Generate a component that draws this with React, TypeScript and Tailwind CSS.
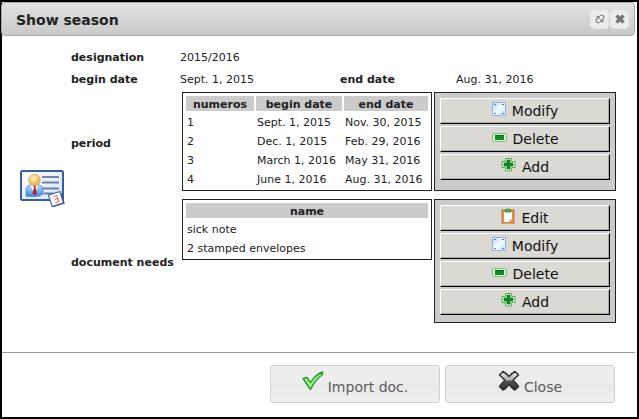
import type { ReactNode } from 'react';

function ModifyIcon() {
  return (
    <svg width="14" height="16" viewBox="0 0 14 16" aria-hidden="true">
      <defs>
        <linearGradient id="sheet" x1="0" y1="0" x2="1" y2="1">
          <stop offset="0" stopColor="#b5d5f8" />
          <stop offset="0.5" stopColor="#f4faff" />
          <stop offset="1" stopColor="#c3dffb" />
        </linearGradient>
      </defs>
      <rect x="0.5" y="1.5" width="13" height="13" fill="url(#sheet)" stroke="#8fb4e2" />
      <path d="M2 3h2v1H2zM10 3h2v1h-2zM2 12h2v1H2zM10 12h2v1h-2z" fill="#4f7fb8" />
    </svg>
  );
}

function DeleteIcon() {
  return (
    <svg width="15" height="16" viewBox="0 0 15 16" aria-hidden="true">
      <rect x="0.5" y="4.5" width="14" height="8" rx="1.5" fill="#dcf5da" stroke="#79c079" />
      <rect x="3" y="6" width="9" height="5" fill="#128a22" />
      <rect x="3" y="6" width="9" height="1" fill="#0a6417" />
    </svg>
  );
}

function AddIcon() {
  return (
    <svg width="15" height="16" viewBox="0 0 15 16" aria-hidden="true">
      <path d="M4.500 1.500h6v3h3.500v6h-3.500v3.500h-6v-3.500h-3.500v-6h3.500z" fill="#e4f8e2" stroke="#55aa58" strokeLinejoin="round" />
      <path d="M6 3h3v3h3v3h-3v3h-3v-3h-3v-3h3z" fill="#0f8a20" stroke="#08701a" strokeWidth="0.600" />
    </svg>
  );
}

function EditIcon() {
  return (
    <svg width="14" height="16" viewBox="0 0 14 16" aria-hidden="true">
      <rect x="1" y="2" width="12" height="13" fill="#e79045" stroke="#c4702a" />
      <path d="M3 4h8v7l-3 3H3z" fill="#fbfcff" />
      <path d="M8 14v-3h3z" fill="#cdd7e6" />
      <path d="M4 4V2.500Q4 1 7 1t3 1.500V4z" fill="#58ac50" stroke="#3b8538" strokeWidth="0.800" />
    </svg>
  );
}

function SeasonIcon() {
  return (
    <svg width="45" height="38" viewBox="0 0 45 38" role="img" aria-label="season">
      <defs>
        <linearGradient id="card" x1="0" y1="0" x2="1" y2="1">
          <stop offset="0" stopColor="#ffffff" />
          <stop offset="1" stopColor="#cfe2fa" />
        </linearGradient>
        <radialGradient id="head" cx="0.4" cy="0.35" r="0.7">
          <stop offset="0" stopColor="#fff2bd" />
          <stop offset="1" stopColor="#dfa443" />
        </radialGradient>
        <linearGradient id="suit" x1="0" y1="0" x2="0" y2="1">
          <stop offset="0" stopColor="#b9dcff" />
          <stop offset="1" stopColor="#3c8be0" />
        </linearGradient>
      </defs>
      <rect x="1" y="1" width="42" height="29" rx="1.500" fill="url(#card)" stroke="#3a5ba2" strokeWidth="2" />
      <path d="M22 7h17M22 12.500h17M22 18.500h17M24 23.500h10" stroke="#777caa" strokeWidth="2" />
      <path d="M6 26v-5q0-6 5-6h7q5 0 5 6v3q-3 2.500-8 2.500T6 26z" fill="url(#suit)" stroke="#3473bd" strokeWidth="0.700" />
      <path d="M10.500 15h8l-4 9z" fill="#ffffff" />
      <path d="M13 15.500h3l-.5 2 1.500 6-2.500 2-2-2 1.500-6z" fill="#bd202b" />
      <circle cx="14.500" cy="10" r="5.800" fill="url(#head)" stroke="#d09b43" strokeWidth="0.600" />
      <g transform="rotate(-18 36 29)">
        <rect x="30" y="23" width="12" height="12" fill="#ffffff" stroke="#426da7" strokeWidth="1.200" />
        <path d="M34 26h4v3h-3h3v3.500h-4" fill="none" stroke="#e77777" strokeWidth="1.200" />
        <path d="M30.500 35.500H42.500V25" fill="none" stroke="#294f88" />
      </g>
    </svg>
  );
}

function CheckIcon() {
  return (
    <svg width="22" height="20" viewBox="0 0 22 20" aria-hidden="true">
      <path d="M1 7.500l4-1 3.500 5Q13 4 20.500 1v2.500Q13 9 8.500 18.500z" fill="#a6f283" stroke="#299834" strokeWidth="1.400" strokeLinejoin="round" />
    </svg>
  );
}

function CrossIcon() {
  return (
    <svg width="22" height="22" viewBox="0 0 22 22" aria-hidden="true">
      <defs>
        <linearGradient id="cross" x1="0" y1="0" x2="0" y2="1">
          <stop offset="0" stopColor="#f0f0f0" />
          <stop offset="0.480" stopColor="#a5a5a5" />
          <stop offset="0.500" stopColor="#505050" />
          <stop offset="1" stopColor="#363636" />
        </linearGradient>
      </defs>
      <path d="M5 1.500Q8 3 11 6.500Q14 3 17 1.500l3.500 3.500Q18 7 15 10.500q3.500 2.500 5.500 6L17 20q-3-1.500-6-5.500Q8 18.500 5 20l-3.500-3.500q2-3.500 5.500-6Q4 7 1.500 5z" fill="url(#cross)" stroke="#303030" strokeWidth="1.500" strokeLinejoin="round" />
    </svg>
  );
}

const icons = {
  Edit: <EditIcon />,
  Modify: <ModifyIcon />,
  Delete: <DeleteIcon />,
  Add: <AddIcon />,
};

function Actions({ names }: { names: (keyof typeof icons)[] }) {
  return (
    <div className="flex flex-col gap-0.5 border border-[#222] bg-[#cbcbcb] px-[5px] pt-[5px] pb-[7px]">
      {names.map((name) => (
        <button
          key={name}
          type="button"
          className="flex h-[26px] items-center justify-center gap-1.5 border border-t-white border-r-black border-b-black border-l-white bg-[#dad9d4] text-sm text-[#111] shadow-[inset_-1px_-1px_#aaa]"
        >
          <span className="pb-1">{icons[name]}</span>
          {name}
        </button>
      ))}
    </div>
  );
}

function DataTable({ label, columns, rows }: { label: string; columns: { name: string; width: string }[]; rows: string[][] }) {
  return (
    <table aria-label={label} className="w-full border-separate self-start border-spacing-0.5 whitespace-nowrap border border-[#222] p-px">
      <thead>
        <tr>
          {columns.map((column) => (
            <th key={column.name} scope="col" className={`${column.width} bg-[#cbcbcb] px-px pt-0.5 text-center leading-[13px] font-bold`}>
              {column.name}
            </th>
          ))}
        </tr>
      </thead>
      <tbody>
        {rows.map((row) => (
          <tr key={row[0]}>
            {row.map((cell) => (
              <td key={cell} className="px-px pt-0.5 leading-[15px]">
                {cell}
              </td>
            ))}
          </tr>
        ))}
      </tbody>
    </table>
  );
}

function Section({ title, children }: { title: string; children: ReactNode }) {
  return (
    <section className="flex items-center">
      <h2 className="w-[111px] shrink-0 pt-1 font-bold">{title}</h2>
      <div className="grid flex-1 grid-cols-[250fr_182fr] gap-0.5">{children}</div>
    </section>
  );
}

const periods = [
  ['1', 'Sept. 1, 2015', 'Nov. 30, 2015'],
  ['2', 'Dec. 1, 2015', 'Feb. 29, 2016'],
  ['3', 'March 1, 2016', 'May 31, 2016'],
  ['4', 'June 1, 2016', 'Aug. 31, 2016'],
];

const toolButton = 'flex size-[19px] items-center justify-center rounded-sm border border-[#e8e8e8] bg-[#ececec] text-[#777]';
const footerButton =
  'flex h-[38px] w-[170px] items-center justify-center gap-1 rounded-[3px] border border-[#d0d0d0] bg-linear-to-b from-[#ededed] from-50% via-[#e8e8e8] via-50% to-[#f0f0f0] text-sm text-[#5c5c5c]';

export default function App() {
  return (
    <div className="flex min-h-screen flex-col border-2 border-black bg-white font-['DejaVu_Sans',sans-serif] text-[11px] leading-[22px] text-[#222]">
      <header className="-ml-px mr-0.5 flex h-[34px] items-center justify-between rounded-[4px] border border-[#aaa] bg-linear-to-b from-[#e2e2e2] to-[#c9c9c9] pr-[5px] pl-3.5">
        <h1 className="pt-0.5 text-sm font-bold">Show season</h1>
        <div className="flex gap-px">
          <button type="button" aria-label="Refresh" className={toolButton}>
            <svg width="12" height="12" viewBox="0 0 12 12" fill="none" stroke="currentColor" aria-hidden="true">
              <g transform="rotate(-40 6 6)">
                <path d="M3.500 8.500Q1.500 8 1.500 6T4.500 3.500H7M5 1.500l2 2-2 2M8.500 3.500q2 .5 2 2.500T7.500 8.500H5M7 6.500l-2 2 2 2" />
              </g>
            </svg>
          </button>
          <button type="button" aria-label="Close window" className={toolButton}>
            <svg width="12" height="12" viewBox="0 0 12 12" stroke="currentColor" strokeWidth="3.400" aria-hidden="true">
              <path d="M2.500 2.500l7 7M9.500 2.500l-7 7" />
            </svg>
          </button>
        </div>
      </header>

      <main className="flex items-center pt-[11px] pr-[21px] pb-[29px] pl-[18px]">
        <div className="w-[51px] shrink-0 pt-2">
          <SeasonIcon />
        </div>
        <div className="flex-1">
          <dl className="grid grid-cols-[109px_160fr_116fr_160fr]">
            <dt className="font-bold">designation</dt>
            <dd className="col-span-3">2015/2016</dd>
            <dt className="font-bold">begin date</dt>
            <dd>Sept. 1, 2015</dd>
            <dt className="font-bold">end date</dt>
            <dd>Aug. 31, 2016</dd>
          </dl>
          <div className="flex flex-col gap-2 pt-px">
            <Section title="period">
              <DataTable
                label="Periods"
                columns={[
                  { name: 'numeros', width: 'w-[68px]' },
                  { name: 'begin date', width: 'w-[86px]' },
                  { name: 'end date', width: 'w-[84px]' },
                ]}
                rows={periods}
              />
              <Actions names={['Modify', 'Delete', 'Add']} />
            </Section>
            <Section title="document needs">
              <DataTable label="Document needs" columns={[{ name: 'name', width: 'w-full' }]} rows={[['sick note'], ['2 stamped envelopes']]} />
              <Actions names={['Edit', 'Modify', 'Delete', 'Add']} />
            </Section>
          </div>
        </div>
      </main>

      <footer className="mr-0.5 flex justify-end gap-[5px] border-t border-[#999] pt-3 pr-5 pb-3">
        <button type="button" className={footerButton}>
          <span className="pb-1.5"><CheckIcon /></span>
          <span className="pt-1.5">Import doc.</span>
        </button>
        <button type="button" className={footerButton}>
          <span className="pb-1.5"><CrossIcon /></span>
          <span className="pt-1.5">Close</span>
        </button>
      </footer>
    </div>
  );
}
